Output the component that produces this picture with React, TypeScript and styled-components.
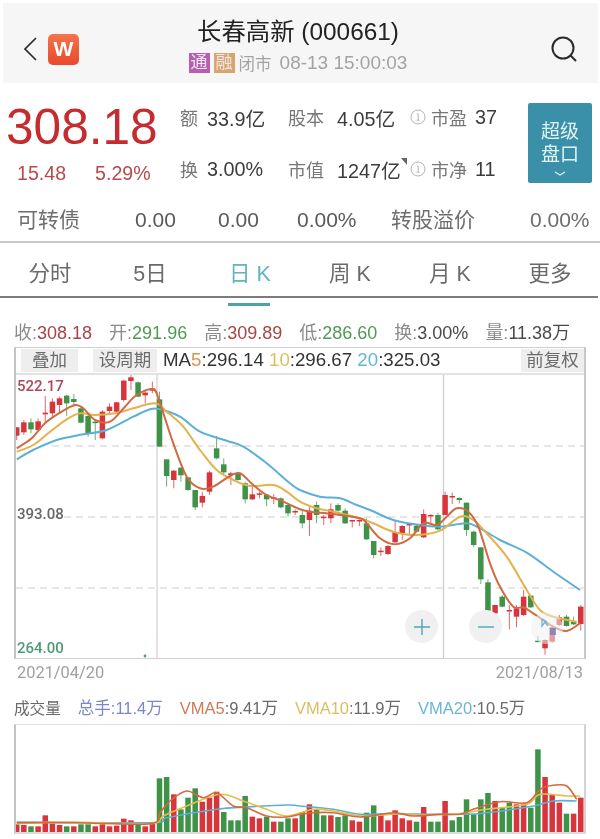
import React from "react";
import styled, { createGlobalStyle } from "styled-components";

const sans = `"Liberation Sans", "Noto Sans CJK SC", sans-serif`;

const Global = createGlobalStyle`
  html, body { margin: 0; padding: 0; background: #fff; }
  body { width: 600px; height: 839px; overflow: hidden; font-family: ${sans}; }
  * { box-sizing: border-box; }
`;

const Page = styled.div`
  width: 600px;
  height: 839px;
  display: flex;
  flex-direction: column;
  background: #fff;
  filter: blur(0.6px);
`;

const Header = styled.header`
  height: 80px;
  margin: 3px 2px 0 3px;
  background: #f6f6f6;
  display: grid;
  grid-template-columns: 100px 1fr 100px;
  align-items: center;
`;
const HeaderLeft = styled.div`
  display: flex;
  align-items: center;
  gap: 9px;
  padding: 12px 0 0 18px;
`;
const LogoBadge = styled.div`
  width: 31px;
  height: 31px;
  border-radius: 5px;
  background: linear-gradient(180deg, #f4744a, #e8492c);
  color: #fff;
  font-weight: 700;
  font-size: 21px;
  line-height: 29px;
  text-align: center;
`;
const HeaderCenter = styled.div`
  display: flex;
  flex-direction: column;
  align-items: center;
  margin-left: -5px;
`;
const Title = styled.div`
  font-size: 24.4px;
  line-height: 30px;
  color: #222;
  margin-top: 4px;
`;
const SubRow = styled.div`
  display: flex;
  align-items: center;
  height: 21px;
  margin-top: 5px;
  color: #a3a3a3;
  font-size: 16.5px;
`;
const Chip = styled.span<{ $bg: string }>`
  width: 21px;
  height: 20px;
  margin-right: 4px;
  background: ${(p) => p.$bg};
  color: #f4e6ee;
  font-size: 17px;
  line-height: 20px;
  text-align: center;
`;
const SubTime = styled.span`
  font-size: 19px;
  margin-left: 8px;
`;
const HeaderRight = styled.div`
  display: flex;
  justify-content: flex-end;
  padding: 13px 20px 0 0;
`;

const Quote = styled.section`
  height: 117px;
  display: flex;
  padding-top: 20px;
`;
const PriceCol = styled.div`
  width: 180px;
  padding-left: 6px;
`;
const Price = styled.div`
  font-size: 49.6px;
  line-height: 48px;
  color: #c42c30;
`;
const PriceSub = styled.div`
  display: flex;
  gap: 29px;
  padding-left: 11px;
  margin-top: 10px;
  font-size: 19.6px;
  line-height: 24px;
  color: #b64a4c;
`;
const StatGrid = styled.div`
  width: 348px;
  display: grid;
  grid-template-columns: 27px 81px 49px 73px 21px 44px 1fr;
  grid-auto-rows: 52px;
  margin-top: -12px;
  align-items: center;
  font-size: 19.8px;
  color: #3c3c3c;
`;
const StatLabel = styled.span`
  color: #777;
  font-size: 18px;
`;
const InfoCell = styled.span`
  display: flex;
  align-items: center;
`;
const SuperButton = styled.button`
  width: 64px;
  height: 80px;
  border: 0;
  padding: 17px 0 0;
  border-radius: 2px;
  background: #3a8fa9;
  color: #e2f3f5;
  font-family: ${sans};
  font-size: 19px;
  line-height: 23px;
  display: flex;
  flex-direction: column;
  align-items: center;
`;

const BondRow = styled.section`
  height: 43px;
  border-bottom: 2px solid #c8c8c8;
  display: grid;
  grid-template-columns: 118px 83px 79px 94px 139px 1fr;
  padding-left: 17px;
  font-size: 21px;
  line-height: 39px;
  color: #5a5a5a;
`;
const BondLabel = styled.span`
  color: #6e6e6e;
`;

const Tabs = styled.nav`
  height: 55px;
  width: 598px;
  display: grid;
  grid-template-columns: repeat(6, 100px);
  border-bottom: 2px solid #7c7c7c;
`;
const Tab = styled.div<{ $on?: boolean }>`
  position: relative;
  text-align: center;
  font-size: 21.5px;
  line-height: 63px;
  color: ${(p) => (p.$on ? "#62b4bd" : "#6a6a6a")};
  &::after {
    content: "";
    display: ${(p) => (p.$on ? "block" : "none")};
    position: absolute;
    left: 28px;
    width: 42px;
    bottom: 0;
    height: 3px;
    background: #4aa3ab;
  }
`;

const Summary = styled.div`
  height: 49px;
  padding: 24px 0 0 14px;
  display: flex;
  gap: 17px;
  font-size: 18px;
  line-height: 22px;
  white-space: nowrap;
  color: #8b8b8b;
`;
const Val = styled.span<{ $c?: string }>`
  color: ${(p) => p.$c ?? "#4a4a4a"};
`;

const ChartBox = styled.div`
  width: 572px;
  height: 312px;
  margin-left: 14px;
  border: 1px solid #d0d0d0;
  border-left: 2px solid #c4c4c4;
  border-right: 2px solid #c8c8c8;
  display: flex;
  flex-direction: column;
`;
const ChartTop = styled.div`
  height: 27px;
  flex: none;
  display: flex;
  align-items: center;
  border-bottom: 2px solid #e2e2e2;
  padding: 0 0 1px 5px;
  font-size: 18px;
  color: #333;
  white-space: nowrap;
`;
const ChartChip = styled.span<{ $w: number; $mr?: number }>`
  width: ${(p) => p.$w}px;
  height: 23px;
  margin-right: ${(p) => p.$mr ?? 0}px;
  flex: none;
  background: #eeeeee;
  color: #6c6c6c;
  font-size: 17.5px;
  line-height: 23px;
  text-align: center;
`;
const MaLine = styled.span`
  flex: 1;
  padding-left: 6px;
  font-size: 18.7px;
`;
const Plot = styled.div`
  position: relative;
  flex: 1;
  svg { display: block; }
`;
const AxisLabel = styled.span<{ $c: string; $top: number }>`
  position: absolute;
  left: 1px;
  top: ${(p) => p.$top}px;
  font-family: Roboto, ${sans};
  font-weight: 500;
  font-size: 15px;
  line-height: 20px;
  color: ${(p) => p.$c};
`;
const ZoomBtn = styled.span<{ $left: number }>`
  position: absolute;
  left: ${(p) => p.$left}px;
  top: 235px;
  width: 33px;
  height: 33px;
  border-radius: 50%;
  background: #f0f0f0;
  display: flex;
  align-items: center;
  justify-content: center;
`;

const DateRow = styled.div`
  height: 30px;
  width: 583px;
  padding: 3px 0 0 17px;
  display: flex;
  justify-content: space-between;
  font-family: Roboto, ${sans};
  font-size: 16.4px;
  line-height: 22px;
  color: #a0a0a0;
`;

const VolHead = styled.div`
  height: 35px;
  padding-left: 14px;
  display: flex;
  gap: 17px;
  align-items: center;
  font-size: 16.5px;
  color: #6a6a6a;
  white-space: nowrap;
`;
const VolTitle = styled.span`
  font-size: 15.6px;
`;
const VolName = styled.span<{ $c: string }>`
  color: ${(p) => p.$c};
`;
const VolBox = styled.div`
  width: 572px;
  height: 110px;
  margin-left: 14px;
  border: 1px solid #e0e0e0;
  border-left: 2px solid #c4c4c4;
  border-right: 2px solid #d4d4d4;
  border-bottom: 2px solid #dcdcdc;
  svg { display: block; }
`;

type C = [number, number, number, number, "r" | "g"];
const candles: C[] = [
  [172,197,172,210,"r"],[157,187,150,195,"r"],[157,178,145,190,"g"],[154,180,145,180,"r"],[128,133,78,160,"r"],
  [95,130,85,140,"r"],[85,105,80,130,"r"],[77,100,75,138,"g"],[87,96,72,110,"g"],[115,158,110,160,"g"],
  [138,192,135,200,"g"],[155,157,150,210,"g"],[125,205,120,208,"r"],[110,123,100,130,"r"],[97,125,95,130,"r"],
  [32,90,30,95,"r"],[22,33,12,60,"r"],[37,80,35,82,"g"],[68,76,60,100,"r"],[55,62,35,70,"r"],
  [88,230,65,230,"g"],[268,318,268,350,"g"],[302,330,300,355,"r"],[293,316,293,335,"g"],[322,360,322,362,"g"],
  [360,412,360,420,"g"],[378,398,365,412,"r"],[307,365,302,375,"r"],[235,265,198,268,"g"],[283,307,265,312,"g"],
  [310,315,305,345,"r"],[310,330,305,332,"g"],[340,388,335,400,"g"],[373,388,345,390,"r"],[370,373,365,385,"r"],
  [374,388,372,408,"g"],[382,385,372,402,"r"],[385,412,382,415,"g"],[405,430,402,440,"g"],[423,426,418,435,"r"],
];
const candles2: C[] = [
  [15,40,0,55,"g"],[2,30,-10,78,"r"],[-15,15,-25,40,"g"],[20,23,15,45,"r"],[-2,25,-20,40,"r"],
  [-15,2,-20,5,"g"],[2,40,-5,42,"g"],[30,33,30,52,"r"],[30,33,28,48,"r"],[40,88,25,90,"g"],
  [93,135,93,145,"g"],[122,125,112,138,"r"],[108,132,105,135,"r"],[66,97,30,98,"r"],[48,70,45,90,"r"],
  [42,46,40,72,"r"],[47,65,45,68,"g"],[12,82,-2,84,"r"],[15,18,12,40,"r"],[15,58,8,60,"g"],
  [-45,15,-55,15,"r"],[-42,-38,-52,-18,"r"],[-36,-30,-38,-20,"g"],[-22,60,-22,78,"g"],[65,105,62,112,"g"],
  [112,208,112,222,"g"],[217,310,208,315,"g"],[285,310,285,340,"r"],[260,290,255,292,"g"],[300,303,285,358,"r"],
  [295,320,285,352,"r"],[260,315,240,318,"r"],[257,292,255,295,"g"],[392,395,378,396,"g"],[390,415,388,434,"r"],
  [352,395,350,398,"r"],[322,345,315,348,"r"],[320,348,315,350,"g"],[335,343,320,345,"g"],[290,342,285,362,"r"],
];
const RED = "#d8343b";
const GREEN = "#3f9348";
const cx = (i: number) => 16.7 + 7.14 * i;

const line = (a: number[][], bx: number, by: number) =>
  a.map(([x, y]) => `${(bx + x / 3).toFixed(1)},${(by + y / 3).toFixed(1)}`);

const smooth = (pts: string[]) => {
  const p = pts.map((s) => s.split(",").map(Number));
  let d = `M${p[0][0]} ${p[0][1]}`;
  for (let i = 0; i < p.length - 1; i++) {
    const p0 = p[Math.max(0, i - 1)], p1 = p[i], p2 = p[i + 1], p3 = p[Math.min(p.length - 1, i + 2)];
    const c1 = [p1[0] + (p2[0] - p0[0]) / 6, p1[1] + (p2[1] - p0[1]) / 6];
    const c2 = [p2[0] - (p3[0] - p1[0]) / 6, p2[1] - (p3[1] - p1[1]) / 6];
    d += `C${c1[0].toFixed(1)} ${c1[1].toFixed(1)} ${c2[0].toFixed(1)} ${c2[1].toFixed(1)} ${p2[0]} ${p2[1]}`;
  }
  return d;
};

const ma5 = smooth([
  ...line([[50,235],[95,205],[135,160],[180,128],[225,105],[250,115],[285,150],[330,155],[375,110],[410,75],[460,58],[480,100],[520,220],[560,320],[600,355],[640,350],[690,318],[720,310],[760,345],[800,375],[850,395],[900,418]],0,370),
  ...line([[30,5],[100,12],[180,25],[200,40],[240,85],[285,103],[330,85],[370,40],[410,45],[440,20],[470,-5],[505,5],[535,50],[570,160],[600,230],[640,290],[670,292],[700,310],[760,350],[800,363],[840,340]],300,510),
]);
const ma10 = smooth([
  ...line([[50,245],[100,225],[150,185],[200,148],[240,130],[285,135],[345,130],[400,115],[465,100],[500,125],[550,170],[600,240],[650,300],[700,330],[750,348],[820,345],[860,365],[900,395]],0,370),
  ...line([[50,-5],[100,5],[180,25],[220,40],[280,65],[350,75],[420,62],[480,20],[520,30],[560,70],[620,140],[680,240],[720,300],[760,320],[830,335]],300,510),
]);
const ma20 = smooth([
  ...line([[50,268],[100,240],[170,210],[250,193],[320,180],[400,140],[450,118],[480,118],[540,140],[600,185],[680,212],[730,230],[800,280],[870,340],[900,360]],0,370),
  ...line([[60,-40],[120,-35],[170,-15],[210,0],[280,30],[340,42],[420,50],[500,40],[540,55],[600,90],[680,128],[760,185],[840,240]],300,510),
]);

const vols: [number, "r" | "g"][] = ([
  [430,"r"],[432,"r"],[436,"g"],[436,"r"],[403,"r"],[428,"r"],[432,"r"],[436,"g"],[436,"r"],[430,"g"],
  [430,"g"],[436,"r"],[430,"r"],[436,"r"],[434,"r"],[413,"r"],[418,"r"],[432,"g"],[436,"r"],[428,"r"],
  [292,"g"],[288,"g"],[340,"r"],[385,"g"],[350,"g"],[322,"g"],[362,"r"],[350,"r"],[332,"r"],[393,"g"],
  [418,"g"],[418,"g"],[345,"g"],[407,"r"],[412,"r"],[407,"g"],[422,"r"],[422,"g"],[412,"g"],[412,"r"],
  [393,"g"],[370,"r"],[385,"g"],[403,"g"],[403,"r"],[408,"g"],[403,"g"],[418,"r"],[422,"r"],[395,"g"],
  [373,"g"],[400,"r"],[418,"r"],[388,"r"],[412,"r"],[418,"r"],[422,"g"],[378,"r"],[422,"g"],[422,"g"],
  [360,"r"],[418,"g"],[408,"g"],[355,"g"],[400,"g"],[355,"g"],[336,"g"],[360,"r"],[380,"g"],[365,"g"],
  [370,"r"],[370,"r"],[380,"g"],[205,"g"],[288,"r"],[340,"r"],[365,"r"],[398,"g"],[398,"r"],[350,"r"],
] as [number, "r" | "g"][]);

const vma5 = smooth([
  ...line([[50,425],[230,425],[450,428],[480,395],[510,360],[560,330],[610,350],[650,335],[700,375],[740,380],[800,405],[860,408]],0,680),
  ...line([[0,400],[40,395],[100,395],[180,408],[280,395],[340,405],[420,400],[480,400],[520,385],[600,362],[680,365],[720,325],[760,313],[800,315],[830,355]],300,680),
]);
const vma10 = smooth([
  ...line([[50,428],[220,423],[450,428],[490,405],[560,375],[660,340],[730,360],[800,385],[860,405]],0,680),
  ...line([[40,385],[100,390],[190,405],[300,398],[350,402],[460,400],[560,385],[680,370],[720,340],[800,345],[840,345]],300,680),
]);
const vma20 = smooth([
  ...line([[50,423],[450,425],[500,410],[650,385],[740,378],[860,372]],0,680),
  ...line([[0,375],[100,385],[180,400],[260,398],[480,400],[560,395],[700,375],[760,360],[830,360]],300,680),
]);

const Candle = ({ i, c, by }: { i: number; c: C; by: number }) => {
  const [t, b, wt, wb, k] = c;
  const col = k === "r" ? RED : GREEN;
  const y1 = by + t / 3, y2 = by + b / 3;
  return (
    <g>
      <line x1={cx(i)} x2={cx(i)} y1={by + wt / 3} y2={by + wb / 3} stroke={col} strokeOpacity={0.75} strokeWidth={1} />
      <rect x={cx(i) - 2.75} y={y1} width={5.5} height={Math.max(1.5, y2 - y1)} fill={col} />
    </g>
  );
};

const Info = () => (
  <svg width="16" height="16" viewBox="0 0 16 16">
    <circle cx="8" cy="8" r="7" fill="none" stroke="#b4b4b4" strokeWidth="1" />
    <path d="M6.8 5h1.4v6M6.5 11.2h3" fill="none" stroke="#b4b4b4" strokeWidth="1" />
  </svg>
);

export default function App() {
  return (
    <>
      <Global />
      <Page>
        <Header>
          <HeaderLeft>
            <svg width="18" height="26" viewBox="0 0 18 26">
              <path d="M15 2 4 13l11 11" fill="none" stroke="#2c2c2c" strokeWidth="1.7" />
            </svg>
            <LogoBadge>W</LogoBadge>
          </HeaderLeft>
          <HeaderCenter>
            <Title>长春高新 (000661)</Title>
            <SubRow>
              <Chip $bg="#b45fb0">通</Chip>
              <Chip $bg="#d6a66e">融</Chip>
              闭市
              <SubTime>08-13 15:00:03</SubTime>
            </SubRow>
          </HeaderCenter>
          <HeaderRight>
            <svg width="28" height="28" viewBox="0 0 28 28">
              <circle cx="13" cy="12" r="10.5" fill="none" stroke="#2a2a2a" strokeWidth="2" />
              <path d="M20.5 19.5 26 25" stroke="#2a2a2a" strokeWidth="2" />
            </svg>
          </HeaderRight>
        </Header>

        <Quote>
          <PriceCol>
            <Price>308.18</Price>
            <PriceSub>
              <span>15.48</span>
              <span>5.29%</span>
            </PriceSub>
          </PriceCol>
          <StatGrid>
            <StatLabel>额</StatLabel>
            <span>33.9亿</span>
            <StatLabel>股本</StatLabel>
            <span>4.05亿</span>
            <InfoCell><Info /></InfoCell>
            <StatLabel>市盈</StatLabel>
            <span>37</span>
            <StatLabel>换</StatLabel>
            <span>3.00%</span>
            <StatLabel>市值</StatLabel>
            <InfoCell>
              1247亿
              <svg width="6" height="8" viewBox="0 0 6 8" style={{ marginTop: -14 }}>
                <path d="M0 0h6v7z" fill="#666" />
              </svg>
            </InfoCell>
            <InfoCell><Info /></InfoCell>
            <StatLabel>市净</StatLabel>
            <span>11</span>
          </StatGrid>
          <SuperButton>
            <span>超级</span>
            <span>盘口</span>
            <svg width="14" height="8" viewBox="0 0 14 8" style={{ marginTop: 4 }}>
              <path d="M2 2 7 5l5-3" fill="none" stroke="#dff1f4" strokeWidth="1.4" />
            </svg>
          </SuperButton>
        </Quote>

        <BondRow>
          <BondLabel>可转债</BondLabel>
          <span>0.00</span>
          <span>0.00</span>
          <span>0.00%</span>
          <BondLabel>转股溢价</BondLabel>
          <BondLabel>0.00%</BondLabel>
        </BondRow>

        <Tabs>
          <Tab>分时</Tab>
          <Tab>5日</Tab>
          <Tab $on>日 K</Tab>
          <Tab>周 K</Tab>
          <Tab>月 K</Tab>
          <Tab>更多</Tab>
        </Tabs>

        <Summary>
          <span>收:<Val $c="#a94446">308.18</Val></span>
          <span>开:<Val $c="#4f9a55">291.96</Val></span>
          <span>高:<Val $c="#a94446">309.89</Val></span>
          <span>低:<Val $c="#4f9a55">286.60</Val></span>
          <span>换:<Val>3.00%</Val></span>
          <span>量:<Val>11.38万</Val></span>
        </Summary>

        <ChartBox>
          <ChartTop>
            <ChartChip $w={57} $mr={15}>叠加</ChartChip>
            <ChartChip $w={64}>设周期</ChartChip>
            <MaLine>
              MA<Val $c="#d8925a">5</Val>:296.14 <Val $c="#dcc25e">10</Val>:296.67 <Val $c="#62b6d4">20</Val>:325.03
            </MaLine>
            <ChartChip $w={63}>前复权</ChartChip>
          </ChartTop>
          <Plot>
            <svg width="568" height="283" viewBox="16 375 568 283">
              <line x1="157" x2="157" y1="375" y2="658" stroke="#dcdcdc" strokeWidth="1.6" />
              <line x1="443.5" x2="443.5" y1="375" y2="658" stroke="#cccccc" strokeWidth="1.2" />
              {[446, 517, 588].map((y) => (
                <line key={y} x1={y === 588 ? 16 : 52} x2="584" y1={y} y2={y} stroke="#dedede" strokeWidth="1.3" strokeDasharray="7 5" />
              ))}
              {candles.map((c, i) => <Candle key={i} i={i} c={c} by={370} />)}
              {candles2.map((c, i) => <Candle key={i} i={i + 40} c={c} by={510} />)}
              <path d={ma20} fill="none" stroke="#5cb0d8" strokeWidth="2" />
              <path d={ma10} fill="none" stroke="#e3b24a" strokeWidth="2" />
              <path d={ma5} fill="none" stroke="#cf6a42" strokeWidth="2" />
              <circle cx="145" cy="656" r="1.4" fill="#4f9a80" />
              <circle cx="547" cy="628" r="16" fill="#f0f0f0" fillOpacity="0.55" />
              <path d="M542 619v7l3-4 3 4M542 619l5 3" fill="none" stroke="#6fb0d8" strokeWidth="1.3" />
              <rect x="550" y="628" width="6" height="7" fill="#6a7fc0" fillOpacity="0.75" />
            </svg>
            <AxisLabel $c="#b04658" $top={1}>522.17</AxisLabel>
            <AxisLabel $c="#666" $top={129}>393.08</AxisLabel>
            <AxisLabel $c="#4f9a78" $top={263}>264.00</AxisLabel>
            <ZoomBtn $left={389}>
              <svg width="18" height="18" viewBox="0 0 18 18">
                <path d="M1 9h16M9 1v16" stroke="#4ea5b8" strokeWidth="1.4" />
              </svg>
            </ZoomBtn>
            <ZoomBtn $left={453}>
              <svg width="18" height="18" viewBox="0 0 18 18">
                <path d="M1 9h16" stroke="#4ea5b8" strokeWidth="1.4" />
              </svg>
            </ZoomBtn>
          </Plot>
        </ChartBox>

        <DateRow>
          <span>2021/04/20</span>
          <span>2021/08/13</span>
        </DateRow>

        <VolHead>
          <VolTitle>成交量</VolTitle>
          <span><VolName $c="#7b86c6">总手</VolName><VolName $c="#7b86c6">:11.4万</VolName></span>
          <span><VolName $c="#cf7a58">VMA5</VolName>:9.41万</span>
          <span><VolName $c="#dcbc64">VMA10</VolName>:11.9万</span>
          <span><VolName $c="#6ab6d8">VMA20</VolName>:10.5万</span>
        </VolHead>

        <VolBox>
          <svg width="568" height="107" viewBox="16 724 568 107">
            {vols.map(([t, k], i) => {
              const y = 680 + t / 3;
              return <rect key={i} x={cx(i) - 2.75} y={y} width={5.5} height={832 - y} fill={k === "r" ? RED : GREEN} />;
            })}
            <path d={vma20} fill="none" stroke="#5cb0d8" strokeWidth="1.6" />
            <path d={vma10} fill="none" stroke="#e3c04a" strokeWidth="1.6" />
            <path d={vma5} fill="none" stroke="#d8683c" strokeWidth="1.6" />
          </svg>
        </VolBox>
      </Page>
    </>
  );
}
